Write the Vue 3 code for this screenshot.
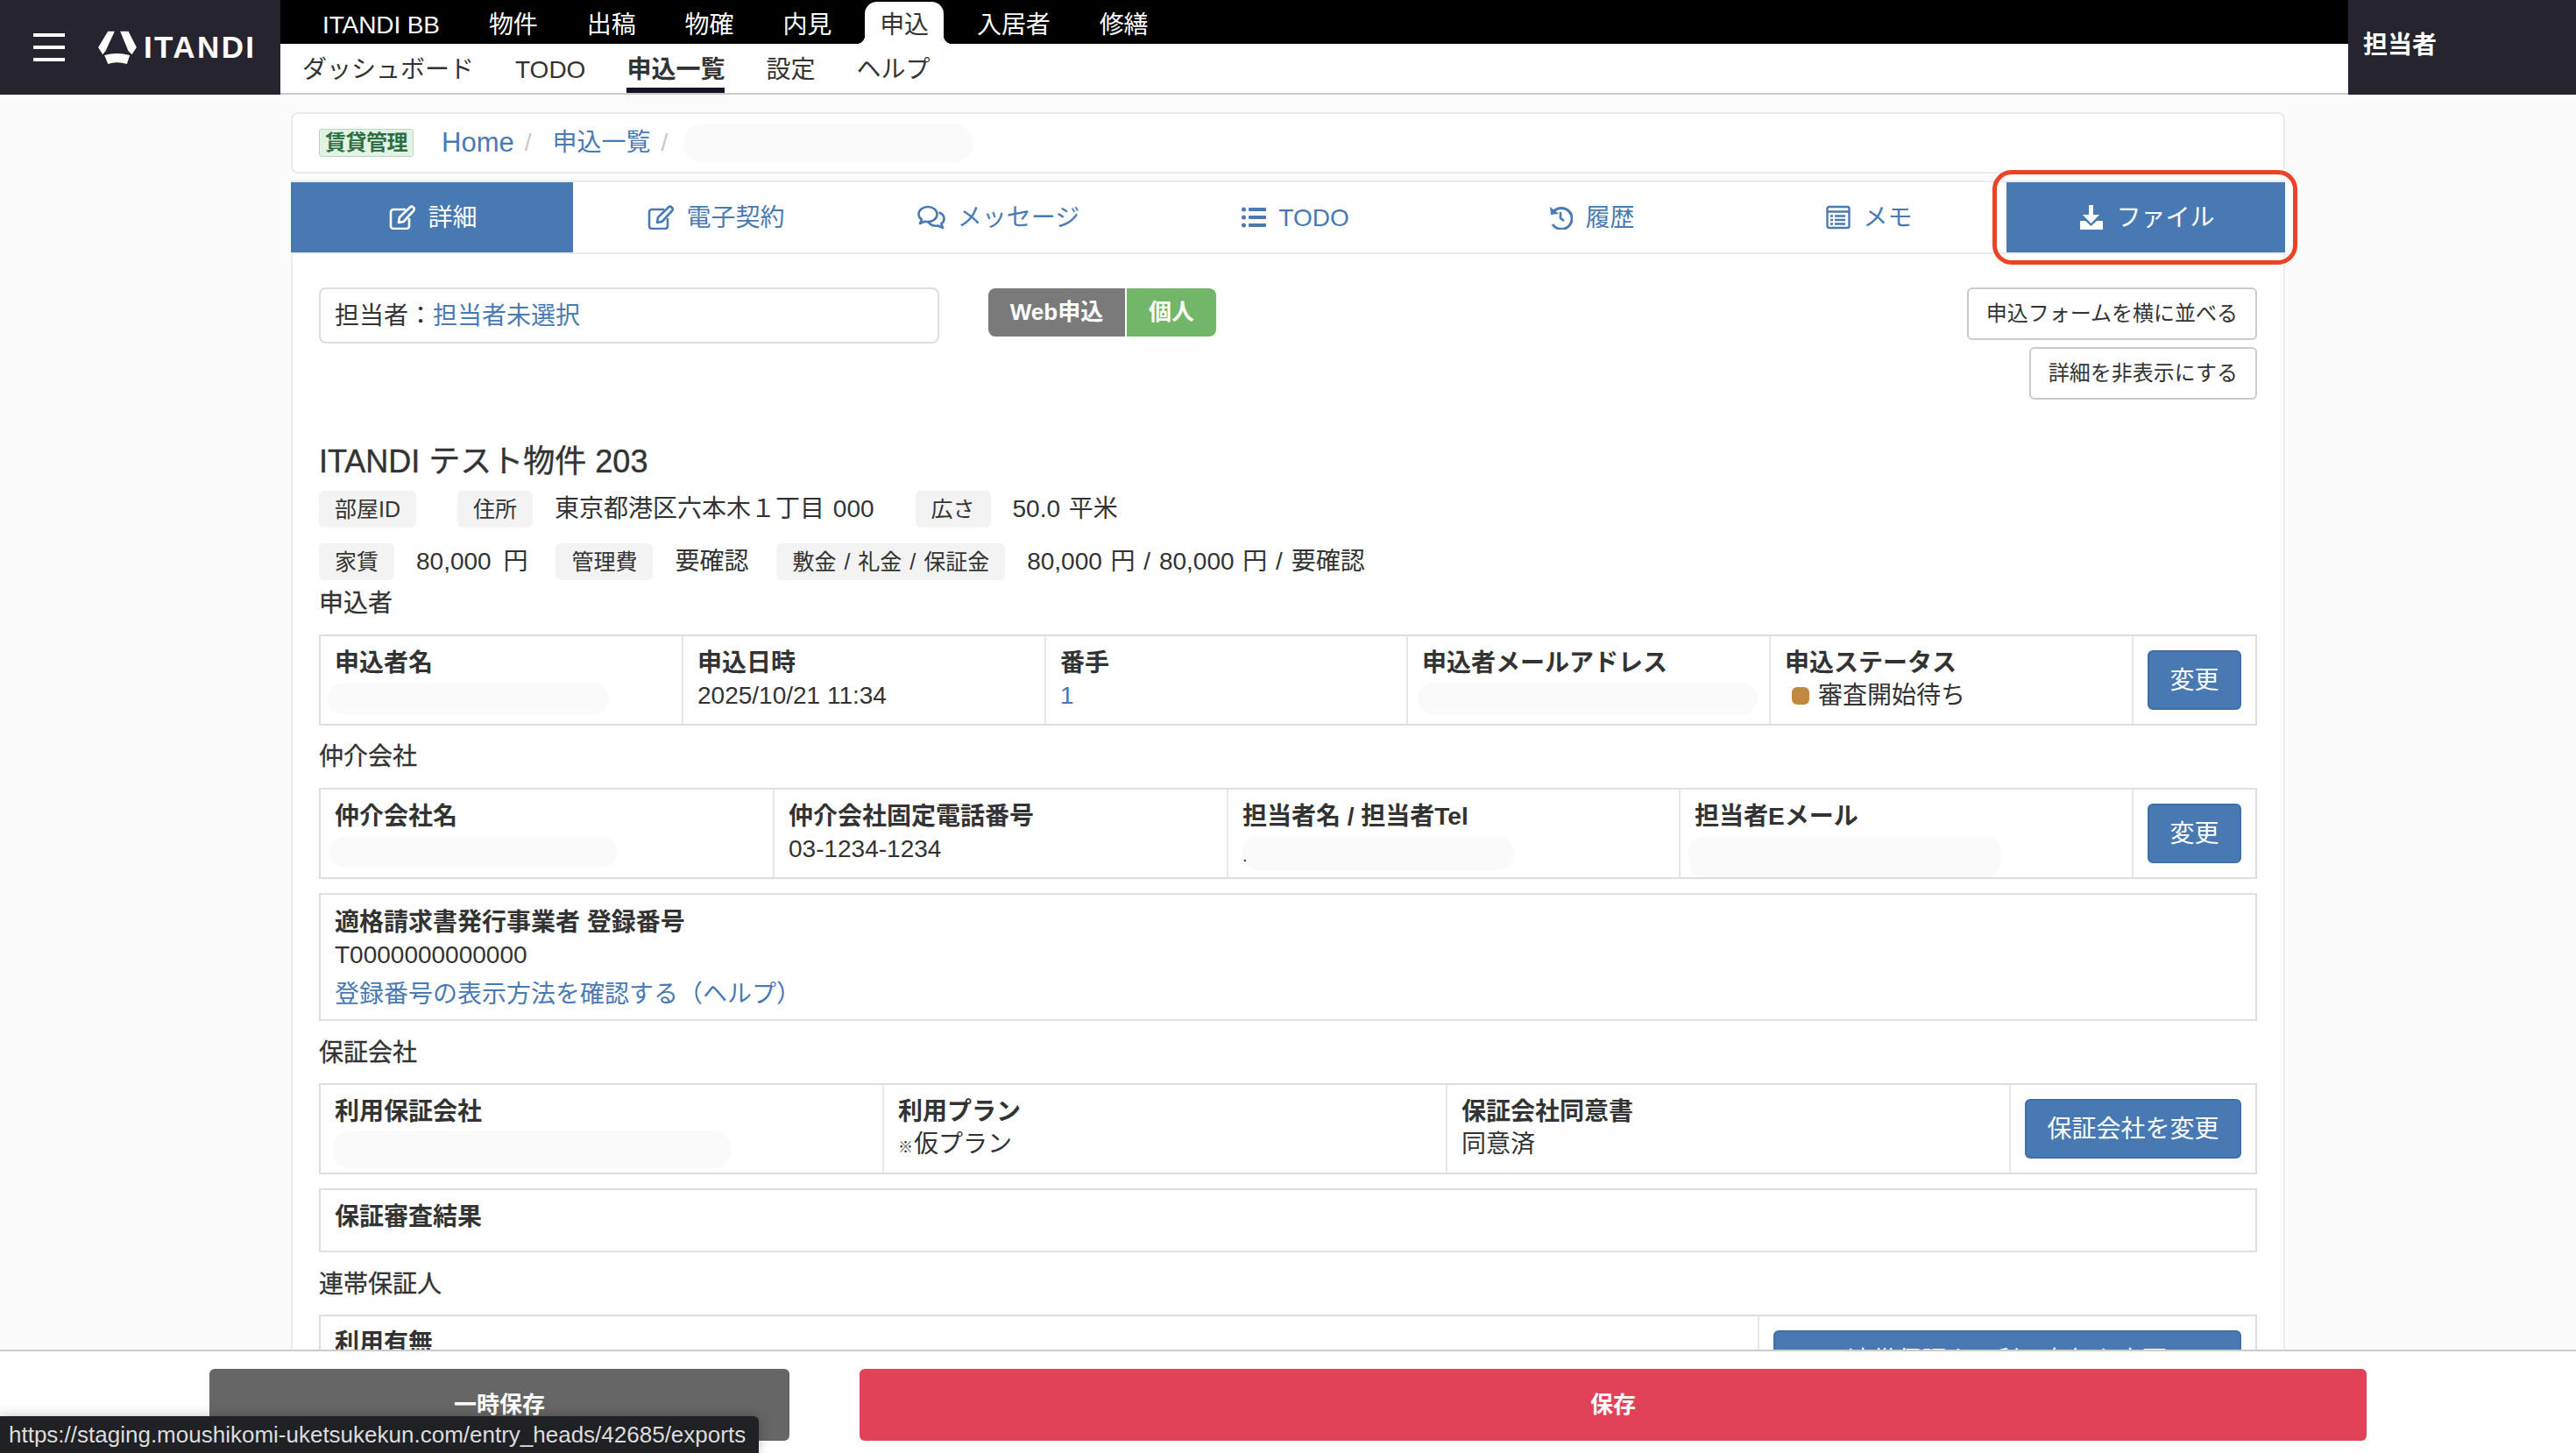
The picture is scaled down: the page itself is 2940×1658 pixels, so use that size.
<script setup>
const topNav = ['ITANDI BB', '物件', '出稿', '物確', '内見', '申込', '入居者', '修繕']
const subNav = ['ダッシュボード', 'TODO', '申込一覧', '設定', 'ヘルプ']
const tabs = [
  { label: '詳細', icon: 'edit', active: true },
  { label: '電子契約', icon: 'edit' },
  { label: 'メッセージ', icon: 'chat' },
  { label: 'TODO', icon: 'list' },
  { label: '履歴', icon: 'history' },
  { label: 'メモ', icon: 'memo' },
  { label: 'ファイル', icon: 'download', active: true },
]
</script>

<template>
  <div class="app">
    <header class="header">
      <div class="brand">
        <svg class="burger" viewBox="0 0 36 32" width="36" height="32"><path d="M0 0h36v4H0zM0 14h36v4H0zM0 28h36v4H0z" fill="#fff" /></svg>
        <svg class="emblem" viewBox="247 38 131 117" width="44" height="39">
          <path fill="#fff" d="M280 40H303L272 108 262 120 247 95ZM322 40H350L378 95 362 120 350 108ZM268 122Q310 110 355 122L345 152Q310 142 280 152Z" />
        </svg>
        <span class="logo-text">ITANDI</span>
      </div>
      <div class="navs">
        <nav class="top-nav">
          <a v-for="n in topNav" :key="n" class="top-item" :class="{ on: n === '申込' }">{{ n }}</a>
        </nav>
        <nav class="sub-nav">
          <a v-for="n in subNav" :key="n" class="sub-item" :class="{ on: n === '申込一覧' }">{{ n }}</a>
        </nav>
      </div>
      <div class="owner">担当者</div>
    </header>

    <main class="main">
      <div class="crumb">
        <span class="badge-rent">賃貸管理</span>
        <a class="link home">Home</a><span class="slash">/</span>
        <a class="link">申込一覧</a><span class="slash">/</span>
        <span class="crumb-blur"></span>
      </div>

      <div class="tabs">
        <a v-for="t in tabs" :key="t.label" class="tab" :class="{ active: t.active }">
          <svg v-if="t.icon === 'edit'" class="ico" viewBox="0 0 30 28" width="30" height="28" fill="none" stroke="currentColor" stroke-width="2.6">
            <path d="M19 5H5a3 3 0 0 0-3 3v16a3 3 0 0 0 3 3h15a3 3 0 0 0 3-3V15" />
            <path d="M11 20l1-6L24 2.5a2.5 2.5 0 0 1 3.5 0l.5.5a2.5 2.5 0 0 1 0 3.5L16.500 19z" stroke-linejoin="round" />
          </svg>
          <svg v-else-if="t.icon === 'chat'" class="ico" viewBox="0 0 32 28" width="32" height="28" fill="none" stroke="currentColor" stroke-width="2.6" stroke-linejoin="round">
            <path d="M12 2C6 2 1.500 6 1.500 10.500c0 2.500 1.300 4.600 3.500 6.100L3 21l5.500-2.300c1.200.3 2.300.4 3.500.4 6 0 10.500-3.800 10.500-8.600S18 2 12 2z" />
            <path d="M24.500 8.500c3.700 1.200 6 4 6 7.200 0 2.200-1.200 4.200-3.200 5.600L29 26l-5.700-2.500c-4.200.7-8.500-.8-10.600-4" />
          </svg>
          <svg v-else-if="t.icon === 'list'" class="ico" viewBox="0 0 28 28" width="28" height="28" fill="currentColor">
            <circle cx="2.500" cy="5" r="2.500" /><circle cx="2.500" cy="14" r="2.500" /><circle cx="2.500" cy="23" r="2.500" />
            <rect x="8" y="3" width="20" height="4" rx="1" /><rect x="8" y="12" width="20" height="4" rx="1" /><rect x="8" y="21" width="20" height="4" rx="1" />
          </svg>
          <svg v-else-if="t.icon === 'history'" class="ico" viewBox="0 0 28 28" width="28" height="28" fill="none" stroke="currentColor" stroke-width="3">
            <path d="M6 7.500A12 12 0 1 1 5 22" />
            <path d="M2 2l1 9 9-1z" fill="currentColor" stroke="none" />
            <path d="M14 8v7l4 3" stroke-width="2.600" />
          </svg>
          <svg v-else-if="t.icon === 'memo'" class="ico" viewBox="0 0 28 28" width="28" height="28" fill="none" stroke="currentColor" stroke-width="2.400">
            <rect x="1.500" y="2" width="25" height="24" rx="2" />
            <path d="M1.500 7.500h25M10 12.500h12M10 17h12M10 21.500h12M5 12.500h3M5 17h3M5 21.500h3" />
          </svg>
          <svg v-else class="ico" viewBox="0 0 28 28" width="28" height="28" fill="currentColor">
            <path d="M11 0h5v11h7L13.500 21 4 11h7z" />
            <path d="M1 18h6l6.500 6 6.500-6h7v10H1z" />
          </svg>
          <span class="tab-text">{{ t.label }}</span>
        </a>
        <span class="ring"></span>
      </div>

      <section class="panel">
        <div class="assign-row">
          <div class="assign">担当者：<a class="link">担当者未選択</a></div>
          <div class="badges"><span class="b-grey">Web申込</span><span class="b-green">個人</span></div>
          <div class="actions">
            <button class="btn-light">申込フォームを横に並べる</button>
            <button class="btn-light">詳細を非表示にする</button>
          </div>
        </div>

        <h1 class="title">ITANDI テスト物件 203</h1>
        <div class="kv first">
          <div class="pair wide-a"><span class="tag">部屋ID</span></div>
          <div class="pair wide-b"><span class="tag">住所</span><span>東京都港区六本木１丁目 000</span></div>
          <div class="pair"><span class="tag">広さ</span><span>50.0 平米</span></div>
        </div>
        <div class="kv">
          <div class="pair"><span class="tag">家賃</span><span class="rent">80,000 円</span></div>
          <div class="pair"><span class="tag">管理費</span><span>要確認</span></div>
          <div class="pair"><span class="tag">敷金 / 礼金 / 保証金</span><span>80,000 円 / 80,000 円 / 要確認</span></div>
        </div>

        <div class="sec s1">申込者</div>
        <div class="table t1">
          <div class="cell"><b>申込者名</b><div class="blur b1"></div></div>
          <div class="cell"><b>申込日時</b><div>2025/10/21 11:34</div></div>
          <div class="cell"><b>番手</b><div><a class="link">1</a></div></div>
          <div class="cell"><b>申込者メールアドレス</b><div class="blur b2"></div></div>
          <div class="cell"><b>申込ステータス</b><div class="status"><i class="dot"></i>審査開始待ち</div></div>
          <div class="cell act"><button class="btn-blue">変更</button></div>
        </div>

        <div class="sec s2">仲介会社</div>
        <div class="table t2">
          <div class="cell"><b>仲介会社名</b><div class="blur b3"></div></div>
          <div class="cell"><b>仲介会社固定電話番号</b><div>03-1234-1234</div></div>
          <div class="cell"><b>担当者名 / 担当者Tel</b><div class="blur b4">.</div></div>
          <div class="cell"><b>担当者Eメール</b><div class="blur b5"></div></div>
          <div class="cell act"><button class="btn-blue">変更</button></div>
        </div>

        <div class="box invoice">
          <b>適格請求書発行事業者 登録番号</b>
          <div class="inv-no">T0000000000000</div>
          <a class="link help">登録番号の表示方法を確認する（ヘルプ）</a>
        </div>

        <div class="sec s3">保証会社</div>
        <div class="table t3">
          <div class="cell"><b>利用保証会社</b><div class="blur b6"></div></div>
          <div class="cell"><b>利用プラン</b><div><span class="mark">※</span>仮プラン</div></div>
          <div class="cell"><b>保証会社同意書</b><div>同意済</div></div>
          <div class="cell act"><button class="btn-blue">保証会社を変更</button></div>
        </div>

        <div class="box review"><b>保証審査結果</b></div>

        <div class="sec s4">連帯保証人</div>
        <div class="table t4">
          <div class="cell"><b>利用有無</b></div>
          <div class="cell act"><button class="btn-blue wide">連帯保証人の利用有無を変更</button></div>
        </div>
      </section>
    </main>

    <footer class="footer">
      <button class="f-grey">一時保存</button>
      <button class="f-red">保存</button>
    </footer>

    <div class="url-tip">https://staging.moushikomi-uketsukekun.com/entry_heads/42685/exports</div>
  </div>
</template>

<style>
html, body { margin: 0; padding: 0; background: #fff; }
</style>

<style scoped>
* { box-sizing: border-box; }
.app {
  position: relative;
  width: 2940px;
  height: 1658px;
  overflow: hidden;
  display: flex;
  flex-direction: column;
  font-family: "Liberation Sans", "Noto Sans CJK JP", sans-serif;
  font-size: 28px;
  line-height: 40px;
  color: #333;
}
.link { color: #4a7ab3; }

.header { display: flex; height: 108px; flex: none; }
.brand {
  width: 320px;
  background: #26242e;
  display: flex;
  align-items: center;
  padding-left: 38px;
}
.burger { margin-right: 38px; }
.emblem { margin-right: 8px; }
.logo-text { color: #fff; font-weight: 700; font-size: 35px; letter-spacing: 2.400px; }
.navs { flex: 1; display: flex; flex-direction: column; }
.top-nav {
  height: 52px;
  background: #000;
  display: flex;
  align-items: flex-end;
  padding-left: 30px;
  gap: 20px;
}
.top-item {
  position: relative;
  height: 48px;
  line-height: 54px;
  padding: 0 18px;
  color: #fff;
  border-radius: 14px 14px 0 0;
  letter-spacing: -0.100px;
}
.top-item.on { background: #fff; color: #333; padding: 0 17px; }
.top-item.on::before, .top-item.on::after {
  content: "";
  position: absolute;
  bottom: 0;
  width: 10px;
  height: 10px;
}
.top-item.on::before { left: -10px; background: radial-gradient(circle at 0 0, #000 10px, #fff 10.500px); }
.top-item.on::after { right: -10px; background: radial-gradient(circle at 100% 0, #000 10px, #fff 10.500px); }
.sub-nav {
  flex: 1;
  display: flex;
  padding-left: 25px;
  gap: 47px;
  background: #fff;
  border-bottom: 2px solid #c9c9cc;
}
.sub-item { height: 56px; line-height: 60px; color: #333; }
.sub-item.on { font-weight: 700; border-bottom: 6px solid #161327; }
.owner {
  width: 260px;
  background: #26242e;
  color: #fff;
  font-weight: 700;
  padding: 32px 0 0 17px;
}

.main {
  flex: 1;
  min-height: 0;
  overflow: hidden;
  background: #fbfbfb;
  padding: 20px 332px 0;
}
.crumb {
  height: 70px;
  border: 2px solid #ebebef;
  border-radius: 8px;
  background: #fff;
  display: flex;
  align-items: center;
  padding-left: 30px;
}
.badge-rent {
  width: 108px;
  height: 32px;
  background: #e3f3e3;
  border: 1px solid #b5dcba;
  border-radius: 3px;
  color: #2f6f45;
  font-weight: 700;
  font-size: 24px;
  line-height: 30px;
  text-align: center;
  white-space: nowrap;
  letter-spacing: -0.500px;
  margin-right: 32px;
}
.home { font-size: 31px; }
.slash { color: #c8c8c8; margin: 0 24px 0 12px; }
.crumb-blur { width: 330px; height: 44px; border-radius: 20px; background: #fafafa; margin-left: -6px; }

.tabs {
  position: relative;
  margin-top: 8px;
  height: 84px;
  background: #fff;
  border-top: 2px solid #e9e9ee;
  border-bottom: 2px solid #e9e9ee;
  display: grid;
  grid-template-columns: 322px 324px 320px 358px 318px 316px 318px;
}
.tab {
  display: flex;
  align-items: center;
  justify-content: center;
  gap: 14px;
  padding-left: 3px;
  color: #4a7ab3;
}
.tab-text { padding-top: 2px; }
.tab.active { background: #4879b2; color: #fff; }
.ico { flex: none; }
.ring {
  position: absolute;
  left: 1942px;
  top: -14px;
  width: 348px;
  height: 108px;
  border: 5px solid #ec4226;
  border-radius: 22px;
}

.panel {
  background: #fff;
  border-left: 2px solid #ececec;
  border-right: 2px solid #ececec;
  padding: 38px 30px 0 30px;
  height: 1300px;
}
.assign-row { display: flex; align-items: flex-start; }
.assign {
  width: 708px;
  height: 64px;
  line-height: 62px;
  border: 2px solid #dedede;
  border-radius: 8px;
  padding-left: 16px;
}
.badges { display: flex; margin-left: 56px; margin-top: 1px; gap: 2px; }
.b-grey, .b-green {
  height: 55px;
  line-height: 55px;
  color: #fff;
  font-weight: 700;
  font-size: 26px;
  text-align: center;
}
.b-grey { width: 156px; background: #7a7a7a; border-radius: 8px 0 0 8px; }
.b-green { width: 102px; background: #72b66a; border-radius: 0 8px 8px 0; }
.actions { margin-left: auto; display: flex; flex-direction: column; align-items: flex-end; gap: 8px; }
.btn-light {
  height: 60px;
  padding: 0 20px;
  background: #fff;
  border: 2px solid #cbcbcb;
  border-radius: 6px;
  color: #333;
  font: inherit;
  font-size: 24px;
}
.title { margin: 46px 0 8px; font-size: 36px; line-height: 50px; font-weight: 400; color: #333; -webkit-text-stroke: 0.4px #333; }
.kv { display: flex; gap: 32px; height: 42px; word-spacing: 2px; }
.kv.first { margin-bottom: 18px; }
.pair { display: flex; align-items: center; gap: 25px; white-space: nowrap; }
.rent { word-spacing: 6px; }
.wide-a { margin-right: 15px; }
.wide-b { margin-right: 15px; }
.tag {
  height: 42px;
  line-height: 42px;
  padding: 0 18px;
  background: #f3f3f3;
  border-radius: 6px;
  font-size: 25px;
}
.sec { -webkit-text-stroke: 0.3px #333; padding-top: 2px; height: 40px; }
.s1 { margin: 5px 0 17px; }
.s2 { margin: 14px 0 17px; }
.s3 { margin: 15px 0 16px; }
.s4 { margin: 15px 0 16px; }
.table { display: grid; grid-auto-rows: 100px; border: 2px solid #dedede; }
.t1 { grid-template-columns: 412px 414px 413px 414px 414px 141px; }
.t2 { grid-template-columns: 516px 518px 516px 517px 141px; }
.t3 { grid-template-columns: 641px 643px 643px 281px; }
.t4 { grid-template-columns: 1640px 568px; }
.cell { padding: 11px 16px 0; border-left: 2px solid #e8e8e8; }
.cell:first-child { border-left: 0; }
.cell b { display: block; font-weight: 700; margin-bottom: -3px; }
.mark { font-size: 17px; margin-right: 1px; }
.act { padding: 16px 0 0; display: flex; justify-content: center; align-items: flex-start; }
.btn-blue {
  height: 68px;
  padding: 2px 23px 0;
  background: #4879b2;
  border: 2px solid #3f6fa6;
  border-radius: 6px;
  color: #fff;
  font: inherit;
  white-space: nowrap;
}
.btn-blue.wide { width: 534px; padding: 2px 0 0; }
.blur { height: 36px; margin: 5px 0 0 -8px; border-radius: 18px; background: #fafafa; }
.b1 { width: 321px; }
.b2 { width: 388px; margin-left: -5px; }
.b3 { width: 328px; margin-left: -6px; }
.b4 { width: 310px; height: 39px; margin-left: 0; font-size: 20px; line-height: 44px; }
.b5 { width: 357px; height: 47px; margin-left: -7px; }
.b6 { width: 454px; height: 42px; margin-left: -2px; }
.status { display: flex; align-items: center; padding-left: 8px; }
.dot { width: 20px; height: 20px; border-radius: 6px; background: #c2883f; margin-right: 10px; }
.box { border: 2px solid #dedede; padding: 12px 16px 0; }
.invoice { margin-top: 16px; height: 146px; }
.invoice b { display: block; }
.inv-no { margin-top: -3px; }
.help { display: block; margin-top: 5px; }
.review { margin-top: 16px; height: 73px; padding-top: 11px; }

.footer {
  flex: none;
  height: 118px;
  background: #fff;
  border-top: 2px solid #cccccc;
  display: flex;
  gap: 80px;
  padding: 20px 0 0 239px;
}
.f-grey, .f-red {
  height: 82px;
  border: 0;
  border-radius: 6px;
  color: #fff;
  font: inherit;
  font-size: 26px;
  font-weight: 700;
}
.f-grey { width: 662px; background: #666; }
.f-red { width: 1720px; background: #e14258; }

.url-tip {
  position: absolute;
  left: 0;
  bottom: 0;
  width: 866px;
  height: 42px;
  line-height: 42px;
  padding-left: 10px;
  background: #202124;
  color: #dcdcdc;
  font-size: 26px;
  white-space: nowrap;
  border-top-right-radius: 6px;
  box-shadow: 0 0 14px rgba(0, 0, 0, 0.25);
}
</style>
